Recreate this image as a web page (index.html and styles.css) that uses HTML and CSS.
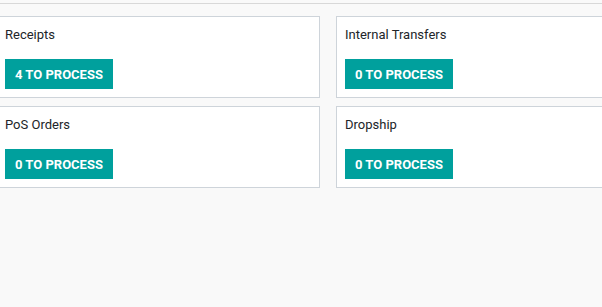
FILE: index.html
```html
<!DOCTYPE html>
<html lang="en">
<head>
    <meta charset="UTF-8">
    <title>Inventory Overview</title>
    <link rel="stylesheet" href="styles.css">
</head>
<body>

<div class="control-panel"></div>

<div class="kanban">
    <div class="card">
        <div class="card-title">Receipts</div>
        <button class="btn-process">4 To Process</button>
    </div>
    <div class="card">
        <div class="card-title">Internal Transfers</div>
        <button class="btn-process">0 To Process</button>
    </div>
    <div class="card">
        <div class="card-title">PoS Orders</div>
        <button class="btn-process">0 To Process</button>
    </div>
    <div class="card">
        <div class="card-title">Dropship</div>
        <button class="btn-process">0 To Process</button>
    </div>
</div>

</body>
</html>
```

FILE: styles.css
```css
html, body {
    margin: 0;
    padding: 0;
    height: 100%;
}
body {
    font-family: Roboto, "Liberation Sans", sans-serif;
    font-size: 13px;
    color: #212529;
    background-color: #f9f9f9;
    overflow: hidden;
}
.control-panel {
    height: 3px;
    border-bottom: 1px solid #d8d8d8;
}
.kanban {
    display: grid;
    grid-template-columns: 324px 324px;
    column-gap: 16px;
    row-gap: 8px;
    margin-top: 12px;
    margin-left: -4px; /* first column starts just off screen */
}
.card {
    background-color: #fff;
    border: 1px solid #ced4da;
    padding: 8px;
}
.card-title {
    line-height: 20px;
    margin-bottom: 14px;
}
.btn-process {
    display: block;
    font-family: inherit;
    font-size: 13px;
    font-weight: bold;
    line-height: 20px;
    text-transform: uppercase;
    color: #fff;
    background-color: #00a09d;
    border: none;
    border-radius: 0;
    padding: 6px 10px 4px;
    cursor: pointer;
}
```
